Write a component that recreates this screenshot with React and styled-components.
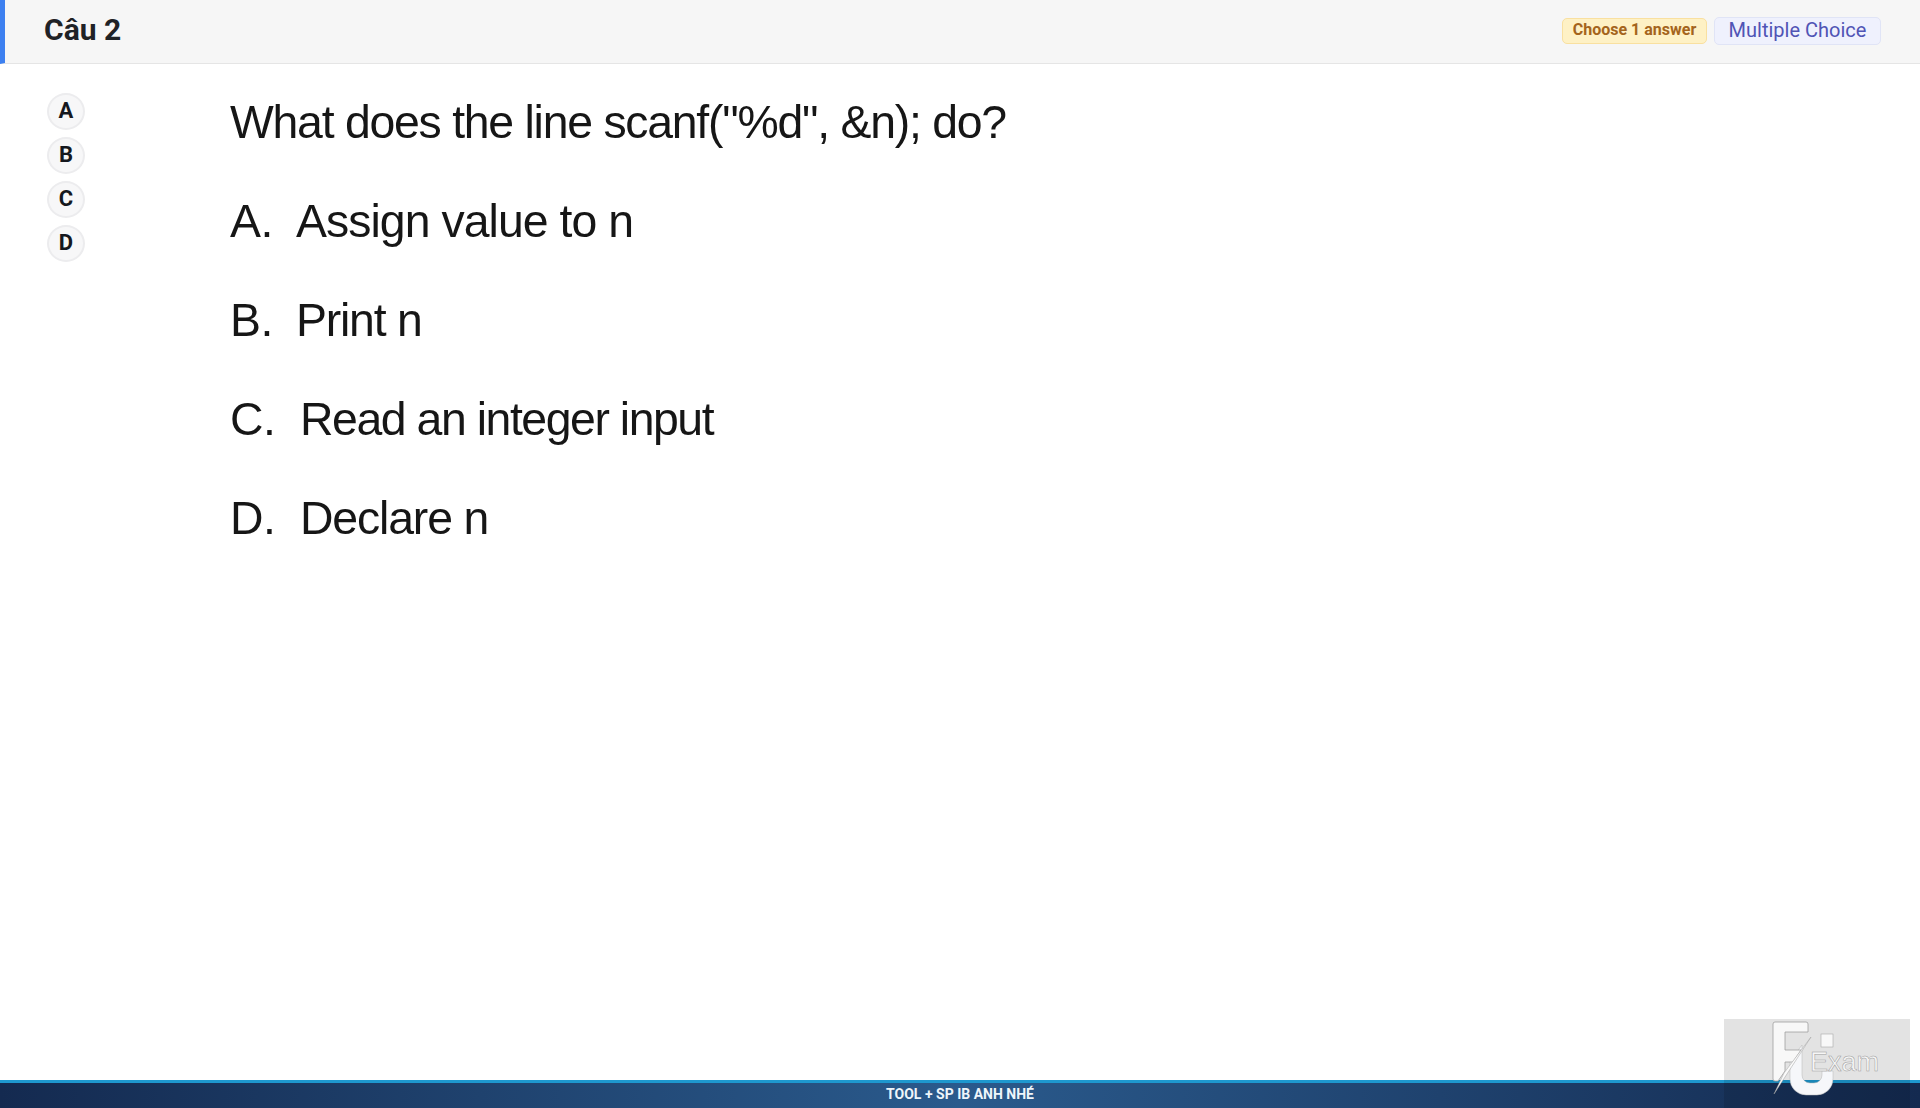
import React from "react";
import styled, { createGlobalStyle } from "styled-components";

const Global = createGlobalStyle`
  html, body { margin: 0; padding: 0; background: #fff; }
  body { font-family: Roboto, "Liberation Sans", sans-serif; }
`;
const Page = styled.div`
  height: 1108px; display: flex; flex-direction: column; position: relative; overflow: hidden;
`;
const Header = styled.header`
  height: 63px; box-sizing: content-box; background: #f6f6f6; border-bottom: 1px solid #e5e5e5;
  border-left: 5px solid #3d80f0; display: flex; align-items: center; justify-content: space-between;
  padding: 0 39px 0 39px; flex: none;
`;
const Title = styled.h1`
  margin: 0 0 3px; font: 700 30px/1 Roboto, sans-serif; color: #1f2226;
`;
const Badges = styled.div`display: flex; align-items: center; gap: 7px; margin-bottom: 2px;`;
const Badge = styled.span`
  box-sizing: border-box; border-radius: 5px; display: inline-flex; align-items: center; justify-content: center;
  padding-bottom: 2px;
  border: 1px solid ${p => p.$tone === "amber" ? "#f9e0a0" : "#e0e4f6"};
  background: ${p => p.$tone === "amber" ? "#fef1c5" : "#eff1fd"};
  color: ${p => p.$tone === "amber" ? "#a4641c" : "#5054b5"};
  font-weight: ${p => p.$tone === "amber" ? 700 : 400};
  font-size: ${p => p.$tone === "amber" ? "16px" : "20px"};
  width: ${p => p.$tone === "amber" ? "145px" : "167px"};
  height: ${p => p.$tone === "amber" ? "26px" : "28px"};
`;
const Main = styled.main`flex: 1; display: flex; min-height: 0;`;
const Choices = styled.div`
  width: 230px; flex: none; box-sizing: border-box; padding: 29px 0 0 47px;
  display: flex; flex-direction: column; gap: 7px;
`;
const Choice = styled.div`
  box-sizing: border-box; width: 38px; height: 37px; border-radius: 50%; padding-bottom: 2px;
  background: #f7f7f8; border: 2px solid #ececee; display: flex; align-items: center; justify-content: center;
  font: 700 22px/1 Roboto, sans-serif; color: #15181e;
`;
const Question = styled.div`
  padding-top: 9px; color: #161616; filter: blur(0.55px);
  font: 400 46.4px/99px "Liberation Sans", Arial, sans-serif;
`;
const Line = styled.div`
  display: flex; white-space: pre; letter-spacing: ${p => p.$ls}px;
`;
const Letter = styled.span`width: ${p => p.$w}px; letter-spacing: -0.5px;`;
const Footer = styled.footer`
  height: 25px; flex: none; border-top: 3px solid #1e98cf; display: flex; align-items: center; justify-content: center;
  box-sizing: content-box;
  background: linear-gradient(90deg, #142a50 0%, #2a5a8c 50%, #142a50 100%);
  color: #eef5fb; font: 700 14px/1 Roboto, sans-serif;
`;
const FooterText = styled.span`margin-bottom: 3px;`;
const Watermark = styled.div`
  position: absolute; right: 10px; bottom: 0; width: 186px; height: 89px; background: rgba(0,0,0,0.11);
`;
const Logo = styled.svg`position: absolute; left: 0; top: 0; width: 186px; height: 89px;`;
const ExamText = styled.text`
  font: 400 27px "Liberation Sans", sans-serif; fill: #f6f6f6; stroke: #9c9c9c; stroke-width: 0.5;
`;

const rows = [
  ["A.", "Assign value to n", 66, -0.95],
  ["B.", "Print n", 66, -1.2],
  ["C.", "Read an integer input", 70, -1.45],
  ["D.", "Declare n", 70, -1.15],
];

export default function App() {
  return (
    <Page>
      <Global />
      <Header>
        <Title>Câu 2</Title>
        <Badges>
          <Badge $tone="amber">Choose 1 answer</Badge>
          <Badge $tone="indigo">Multiple Choice</Badge>
        </Badges>
      </Header>
      <Main>
        <Choices>
          {["A", "B", "C", "D"].map(c => <Choice key={c}>{c}</Choice>)}
        </Choices>
        <Question>
          <Line $ls={-1.25}>What does the line scanf("%d", &amp;n); do?</Line>
          {rows.map(([l, t, w, ls]) => (
            <Line key={l} $ls={ls}><Letter $w={w}>{l}</Letter>{t}</Line>
          ))}
        </Question>
      </Main>
      <Footer><FooterText>TOOL + SP IB ANH NHÉ</FooterText></Footer>
      <Watermark>
        <Logo viewBox="0 0 186 89">
          <path d="M66 42 78 26V56a8 8 0 0 0 8 8H90a8 8 0 0 0 8-8V52H109V60A16 16 0 0 1 93 76H82A16 16 0 0 1 66 60z" fill="#f6f7fa" stroke="#b5b5b5" strokeWidth="0.5" />
          <path d="M51 3H82q2 0 2 2V13H61V31H77L69 43H61V52L54 62H51q-2 0-2-2V5q0-2 2-2z" fill="#f8f8f8" stroke="#a0a0a0" strokeWidth="0.8" />
          <path d="M87 18 50 75 60 54z" fill="#fafafa" stroke="#a0a0a0" strokeWidth="0.5" />
          <rect x="97" y="15" width="12" height="13" fill="#f8f8f8" stroke="#a9a9a9" strokeWidth="0.6" />
          <ExamText x="86" y="52">Exam</ExamText>
        </Logo>
      </Watermark>
    </Page>
  );
}
